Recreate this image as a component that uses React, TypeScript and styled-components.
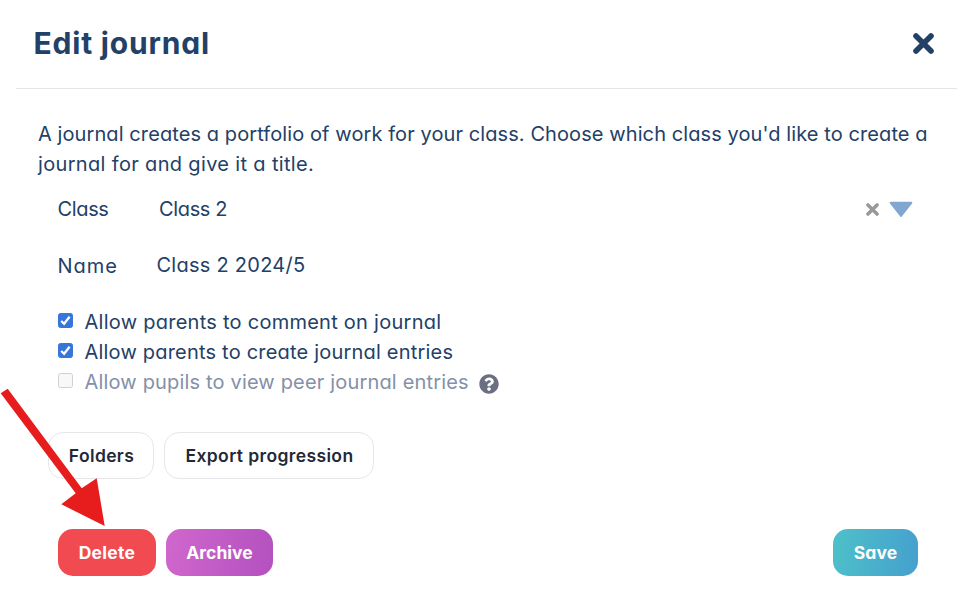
import React from "react";
import styled, { createGlobalStyle } from "styled-components";
import { FaQuestionCircle } from "react-icons/fa";

const GlobalStyle = createGlobalStyle`
  *, *::before, *::after { box-sizing: border-box; }
  body {
    margin: 0;
    background: #fff;
    color: #234067;
    font-family: Inter, "Liberation Sans", sans-serif;
    font-feature-settings: "cv11";
    overflow: hidden;
  }
`;

const Dialog = styled.main`
  position: relative;
  display: flex;
  flex-direction: column;
  width: 957px;
  height: 590px;
  background: #fff;
`;

const Header = styled.header`
  display: flex;
  align-items: center;
  justify-content: space-between;
  height: 89px;
  margin-left: 16px;
  padding: 0 23px 2px 17.5px;
  border-bottom: 1px solid #e4e5e7;
`;

const Title = styled.h1`
  margin: 0;
  font-size: 30px;
  font-weight: 650;
  line-height: 40px;
  letter-spacing: 0.8px;
`;

const IconButton = styled.button`
  display: flex;
  padding: 0;
  border: 0;
  background: none;
`;

const Text = styled.span<{ $spacing?: number }>`
  font-size: 20px;
  line-height: 30px;
  letter-spacing: ${(p) => p.$spacing ?? 0}px;
  white-space: nowrap;
`;

const Intro = styled.p`
  display: flex;
  flex-direction: column;
  margin: 0;
  padding: 30px 0 0 38px;
`;

const Form = styled.form`
  display: flex;
  flex-direction: column;
`;

const Field = styled.div<{ $gap: number }>`
  display: flex;
  align-items: center;
  height: 30px;
  margin-top: ${(p) => p.$gap}px;
  padding: 0 44px 0 57.5px;
`;

const Label = styled(Text).attrs({ as: "label" })`
  width: 101.5px;
`;

const NameValue = styled(Text)`
  margin: -2px 0 0 -2.5px;
`;

const SelectActions = styled.div`
  display: flex;
  align-items: center;
  gap: 10px;
  margin-left: auto;
`;

const Options = styled.div`
  display: flex;
  flex-direction: column;
  margin-top: 26px;
  padding-left: 58px;
`;

const Option = styled.label<{ $disabled?: boolean }>`
  display: flex;
  align-items: center;
  height: 30px;
  color: ${(p) => (p.$disabled ? "#8391a8" : "inherit")};
`;

const Box = styled.span<{ $checked?: boolean }>`
  display: flex;
  width: 15px;
  height: 15px;
  margin: -3px 11.5px 0 0;
  border: 1px solid ${(p) => (p.$checked ? "#3675d9" : "#d0d0d0")};
  border-radius: 2.5px;
  background: ${(p) => (p.$checked ? "#3675d9" : "#f8f8f8")};
`;

const Help = styled(FaQuestionCircle)`
  width: 20px;
  height: 20px;
  margin: 4px 0 0 10px;
  color: #6a7080;
`;

const Tools = styled.div`
  display: flex;
  gap: 10px;
  margin-top: 35px;
  padding-left: 48px;
`;

const Actions = styled.footer`
  display: flex;
  gap: 10px;
  margin-top: 50px;
  padding: 0 39px 0 58px;
`;

const Button = styled.button<{ $width: number; $spacing: number }>`
  display: flex;
  align-items: center;
  justify-content: center;
  width: ${(p) => p.$width}px;
  height: 47px;
  padding: 0;
  border: 0;
  border-radius: 15px;
  color: #fff;
  font: 700 17.5px/24px Inter, "Liberation Sans", sans-serif;
  font-feature-settings: "cv11";
  letter-spacing: ${(p) => p.$spacing}px;
`;

const OutlineButton = styled(Button)`
  padding-left: 1px;
  border: 1px solid #e5e7eb;
  background: #fff;
  color: #1f2937;
  font-weight: 600;
`;

const DeleteButton = styled(Button)`
  background: #f14a50;
`;

const ArchiveButton = styled(Button)`
  background: linear-gradient(100deg, #d067cd, #b351bf);
`;

const SaveButton = styled(Button)`
  margin-left: auto;
  background: linear-gradient(100deg, #4ec1c9, #459fce);
`;

const Arrow = styled.svg`
  position: absolute;
  left: 0;
  top: 380px;
  pointer-events: none;
`;

function Cross({ size, stroke, color }: { size: number; stroke: number; color: string }) {
  const a = stroke / 2 + 0.2;
  const b = size - a;
  return (
    <svg width={size} height={size}>
      <path d={`M${a} ${a}L${b} ${b}M${b} ${a}L${a} ${b}`} stroke={color} strokeWidth={stroke} strokeLinecap="round" />
    </svg>
  );
}

function CheckBox({ checked }: { checked?: boolean }) {
  return (
    <Box $checked={checked}>
      {checked && (
        <svg width="13" height="13" viewBox="0 0 13 13">
          <path d="M2.2 7L5.1 9.8L10.6 2.8" fill="none" stroke="#fff" strokeWidth="2.3" />
        </svg>
      )}
    </Box>
  );
}

export default function App() {
  return (
    <>
      <GlobalStyle />
      <Dialog>
        <Header>
          <Title>Edit journal</Title>
          <IconButton aria-label="Close">
            <Cross size={21} stroke={5.6} color="#234067" />
          </IconButton>
        </Header>
        <Intro>
          <Text $spacing={0.09}>
            A journal creates a portfolio of work for your class. Choose which class you'd like to create a
          </Text>
          <Text $spacing={0.34}>journal for and give it a title.</Text>
        </Intro>
        <Form onSubmit={(e) => e.preventDefault()}>
          <Field $gap={15}>
            <Label $spacing={-0.35}>Class</Label>
            <Text $spacing={-0.35}>Class 2</Text>
            <SelectActions>
              <Cross size={13} stroke={3.5} color="#999" />
              <svg width="24" height="16" viewBox="0 0 24 16">
                <path d="M1.7 1.8H22.3L12 15Z" fill="#81a7d0" stroke="#81a7d0" strokeWidth="2" strokeLinejoin="round" />
              </svg>
            </SelectActions>
          </Field>
          <Field $gap={27}>
            <Label $spacing={1}>Name</Label>
            <NameValue $spacing={0.26}>Class 2 2024/5</NameValue>
          </Field>
          <Options>
            <Option>
              <CheckBox checked />
              <Text $spacing={0.26}>Allow parents to comment on journal</Text>
            </Option>
            <Option>
              <CheckBox checked />
              <Text $spacing={0.2}>Allow parents to create journal entries</Text>
            </Option>
            <Option $disabled>
              <CheckBox />
              <Text $spacing={0.17}>Allow pupils to view peer journal entries</Text>
              <Help />
            </Option>
          </Options>
          <Tools>
            <OutlineButton $width={106} $spacing={0.36}>Folders</OutlineButton>
            <OutlineButton $width={210} $spacing={0.38}>Export progression</OutlineButton>
          </Tools>
          <Actions>
            <DeleteButton $width={98} $spacing={0.3}>Delete</DeleteButton>
            <ArchiveButton $width={107} $spacing={0.05}>Archive</ArchiveButton>
            <SaveButton $width={85} $spacing={0.1}>Save</SaveButton>
          </Actions>
        </Form>
        <Arrow width="110" height="150" viewBox="0 0 110 150">
          <path d="M0.7 13.3L7.7 8.7L81.7 108.3L96.7 98.3L104.7 146L61.3 124.3L75.7 113.3Z" fill="#e71c1c" />
        </Arrow>
      </Dialog>
    </>
  );
}
